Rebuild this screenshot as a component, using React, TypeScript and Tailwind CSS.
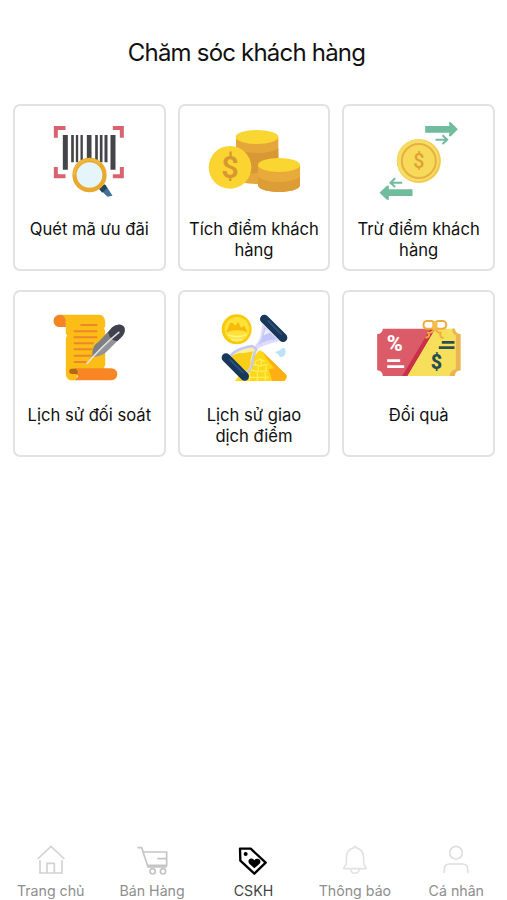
import { ReactNode, useState } from 'react'

const ICON = 'block w-[100px] h-[90px] shrink-0'

function ScanIcon() {
  return (
    <svg className={ICON} viewBox="-2.5 0 300 270" fill="none">
      <g stroke="#d9626f" strokeWidth="12">
        <path d="M48 68V39H77M219 39H246V68M48 156V184H77M219 184H246V156"/>
      </g>
      <g fill="#454549">
        <path d="M69 60h15v104H69zM94 60h8v82h-8zM108 60h7v82h-7zM122 60h7v76h-7zM141 60h14v75h-14zM166 60h8v78h-8zM180 60h8v82h-8zM194 60h9v82h-9zM212 60h15v104h-15z"/>
      </g>
      <path d="M177 220L197 209L218 242L203 245Z" fill="#3f719b"/>
      <path d="M176 220L195 208L202 220L187 233Z" fill="#294456"/>
      <circle cx="149" cy="180" r="45" fill="#e4f5fc" stroke="#eaa92e" strokeWidth="13"/>
      <path d="M103 180a46 46 0 0 1 78-33" stroke="#f1b642" strokeWidth="7"/>
    </svg>
  )
}

function CoinsIcon() {
  return (
    <svg className={ICON} viewBox="12 0 300 270">
      <path d="M108 66V190C108 200 138 207 170 207C205 207 235 200 235 190V66Z" fill="#e5a73a"/>
      <path d="M108 99C130 119 212 119 235 99V133C200 133 177 140 174 157V174C150 178 125 174 108 166Z" fill="#d89835"/>
      <ellipse cx="171" cy="66" rx="64" ry="21" fill="#fad632"/>
      <path d="M174 150V212C184 237 290 237 300 212V150Z" fill="#e7aa3b"/>
      <path d="M174 184C192 207 282 207 300 184V212C290 237 184 237 174 212Z" fill="#dc9d36"/>
      <ellipse cx="237" cy="150" rx="63" ry="21" fill="#fad632"/>
      <circle cx="90" cy="157" r="64" fill="#fbd432"/>
      <path d="M52 105A64 64 0 0 0 130 207A64 64 0 0 1 52 105Z" fill="#fedc41"/>
      <text x="90" y="189" textAnchor="middle" fontFamily="Roboto, sans-serif" fontSize="92" fontWeight="600" fill="#d9982f">$</text>
    </svg>
  )
}

function TransferIcon() {
  return (
    <svg className={ICON} viewBox="-4.5 0 300 270">
      <g fill="#70bc9d">
        <path d="M164 33H237L235 22H241L262 43L241 64H235L237 53H164Z"/>
        <path d="M126 223H55V212H49L27 233L49 254H55V243H126Z"/>
      </g>
      <g fill="none" stroke="#70bc9d" strokeWidth="6">
        <path d="M195 74H229M216 61L230 74L216 87M95 203H61M74 190L60 203L74 216"/>
      </g>
      <circle cx="145" cy="138" r="66" fill="#f0c94e"/>
      <circle cx="142" cy="136" r="63" fill="#f5dc62"/>
      <circle cx="145" cy="138" r="51" fill="#f7da59" stroke="#e8b043" strokeWidth="6"/>
      <text x="145" y="159" textAnchor="middle" fontFamily="Roboto, sans-serif" fontSize="59" fontWeight="500" fill="#dfa136">$</text>
    </svg>
  )
}

function ScrollIcon() {
  return (
    <svg className={ICON} viewBox="-1.5 0 300 270">
      <path d="M61 41H176C190 41 197 49 197 63V76L193 82L197 90V193L193 200L197 207V222H98C86 222 79 214 79 204V111L83 104L79 98V63Z" fill="#fbbd16"/>
      <path d="M61 41C36 41 36 78 61 78H79V63C79 52 73 41 61 41Z" fill="#f58426"/>
      <path d="M79 202H112V238H98C86 238 79 230 79 218Z" fill="#fbbd16"/>
      <path d="M103 202H214C240 202 240 238 214 238H107L116 225L109 220L118 211Z" fill="#f98625"/>
      <path d="M97 203C86 203 87 219 97 219H113L116 211L109 203Z" fill="#b76518"/>
      <g stroke="#ed872d" strokeWidth="6" strokeLinecap="round">
        <path d="M125 72H171M105 91H171M105 109H171M105 127H160M105 145H156M105 164H155M105 183H139"/>
      </g>
      <path d="M160 167C156 146 163 132 178 122L217 80C229 70 246 67 254 78C260 92 252 104 240 113L206 148C195 160 181 168 160 167Z" fill="#939497"/>
      <path d="M160 167C156 146 163 132 178 122L217 80C229 70 246 67 248 75Z" fill="#7d7f83"/>
      <path d="M207 94L217 80C229 70 246 67 254 78C260 92 252 104 234 120C220 121 208 111 207 94Z" fill="#40414f"/>
      <path d="M143 187C170 156 198 126 238 94" fill="none" stroke="#dfdfdc" strokeWidth="5" strokeLinecap="round"/>
    </svg>
  )
}

function HourglassIcon() {
  return (
    <svg className={ICON} viewBox="-3 0 300 270">
      <circle cx="95" cy="85" r="45" fill="#f9c90b"/>
      <circle cx="96" cy="85" r="37" fill="#ffe137"/>
      <path d="M64 94L75 67C81 62 87 67 90 75L100 62L108 80L118 74L128 95C113 85 79 86 64 94Z" fill="#f6bb08"/>
      <path d="M69 102Q96 112 123 102M79 115Q95 121 111 115" fill="none" stroke="#fbf48d" strokeWidth="5"/>
      <path d="M90 240L159 151Q165 146 171 151L242 220Q250 231 237 240Z" fill="#ffd719"/>
      <path d="M171 151L242 220Q250 231 237 240H202L191 205L209 202L190 180Z" fill="#ffae13"/>
      <path d="M151 181L165 175L179 181M136 195L151 190L165 195L188 190M120 211L139 207L158 212L188 209M113 229H192M151 181V195M169 178V192M138 196V211M160 196V211M183 194V210M134 213V239M157 213V239M181 213V239" fill="none" stroke="#ffec58" strokeWidth="4"/>
      <path d="M171 68Q170 116 151 132Q146 139 152 146Q174 132 224 120Z" fill="#dddcff"/>
      <path d="M177 77Q175 115 157 132Q187 116 216 115Z" fill="#c2c5fa"/>
      <path d="M181 84L176 103L198 94Z" fill="#ecebff"/>
      <path d="M73 169Q88 144 142 135L153 148Q139 165 140 188Q138 204 126 216Z" fill="#fff0a0"/>
      <path d="M76 171Q88 154 119 156L145 151Q135 170 137 188Q134 204 124 211Z" fill="#f8ce19"/>
      <path d="M73 169Q88 144 142 135L154 145Q143 165 142 187Q139 204 126 215" fill="none" stroke="#c5c7f7" strokeWidth="7"/>
      <g stroke="#18375b" strokeWidth="26" strokeLinecap="round">
        <path d="M178 54L234 110M63 170L119 226"/>
      </g>
      <g stroke="#2c4f76" strokeWidth="6" strokeLinecap="round">
        <path d="M190 60L228 99M76 177L114 215"/>
      </g>
      <path d="M207 153Q224 152 230 142Q242 137 242 153Q240 171 224 167Q220 157 207 153Z" fill="#bce2f9"/>
    </svg>
  )
}

function VoucherIcon() {
  return (
    <svg className={ICON} viewBox="-3.5 -15 300 270">
      <path d="M38 68H196L112 210H38Q37 194 21 193V84Q37 83 38 68Z" fill="#dc5b68"/>
      <path d="M181 68H196L112 210H96Z" fill="#ca3048"/>
      <path d="M196 68H254Q255 83 271 84V193Q255 194 254 210H112Z" fill="#f8df5b"/>
      <path d="M246 68H254Q255 83 271 84V193Q255 194 254 210H238Q240 194 257 189V88Q246 83 246 68Z" fill="#eab454"/>
      <g fill="none" stroke="#efad3e" strokeWidth="6">
        <rect x="160" y="45" width="33" height="23" rx="10"/>
        <rect x="195" y="45" width="33" height="23" rx="10"/>
        <path d="M192 65Q190 81 175 81Q181 94 166 95M196 65Q198 81 211 80Q207 96 221 95"/>
      </g>
      <rect x="186" y="46" width="16" height="25" rx="5" fill="#f7bd48"/>
      <text x="74" y="135" textAnchor="middle" fontFamily="Roboto, sans-serif" fontSize="65" fontWeight="800" fill="#fff">%</text>
      <g stroke="#fff" strokeWidth="8"><path d="M51 164H90M51 182H102"/></g>
      <g stroke="#284e52" strokeWidth="8"><path d="M215 109H253M206 125H253"/></g>
      <text x="199" y="188" textAnchor="middle" fontFamily="Roboto, sans-serif" fontSize="59" fontWeight="800" fill="#244e53">$</text>
    </svg>
  )
}

function NavSvg({ children }: { children: ReactNode }) {
  return (
    <svg className="block w-9 h-[30px]" viewBox="0 0 108 90" fill="none" stroke="currentColor" strokeWidth="5">
      {children}
    </svg>
  )
}

const FEATURES = [
  { label: 'Quét mã ưu đãi',       icon: ScanIcon },
  { label: 'Tích điểm khách hàng', icon: CoinsIcon },
  { label: 'Trừ điểm khách hàng',  icon: TransferIcon },
  { label: 'Lịch sử đối soát',     icon: ScrollIcon },
  { label: 'Lịch sử giao dịch điểm', icon: HourglassIcon },
  { label: 'Đổi quà',              icon: VoucherIcon },
]

const TABS = [
  {
    label: 'Trang chủ',
    cor: 'text-[#d2d2d2]',
    icon: <path strokeWidth="5" d="M14 42L54 4L94 42M21 46V84H87V46M42 84V55H64V84"/>,
  },
  {
    label: 'Bán Hàng',
    cor: 'text-[#c5c5c5]',
    icon: (
      <g strokeWidth="5">
        <path d="M10 8H23L42 66H98M29 21H98V61H41M70 41H96"/>
        <circle cx="56" cy="79" r="8"/>
        <circle cx="87" cy="79" r="8"/>
      </g>
    ),
  },
  {
    label: 'CSKH',
    cor: 'text-black',
    icon: (
      <>
        <path strokeWidth="7" strokeLinejoin="round" d="M15 11H47L92 53L58 86L16 47Z"/>
        <circle cx="32" cy="27" r="6" fill="currentColor" stroke="none"/>
        <path stroke="none" fill="currentColor" d="M58 70L43 56C34 44 50 34 58 46C66 35 84 45 73 57Z"/>
      </>
    ),
  },
  {
    label: 'Thông báo',
    cor: 'text-[#e2e2e2]',
    icon: <path strokeLinejoin="round" d="M51 8Q54 0 57 8C72 12 80 24 80 40V56L88 71H20L28 56V40C28 24 36 12 51 8ZM41 72C43 89 65 89 67 72"/>,
  },
  {
    label: 'Cá nhân',
    cor: 'text-[#dedede]',
    icon: (
      <>
        <circle cx="54" cy="23" r="19"/>
        <path strokeLinecap="round" d="M19 82V73Q19 57 35 57H73Q89 57 89 73V82"/>
      </>
    ),
  },
]

export default function App() {
  const [active, setActive] = useState('CSKH')

  return (
    <div className="h-screen flex flex-col bg-white text-[#111] font-['Inter',sans-serif]">
      <header className="h-[104px] shrink-0 pt-9 pr-[14px] text-center">
        <h1 className="text-[24px] leading-[34px] tracking-[-0.8px]">Chăm sóc khách hàng</h1>
      </header>

      <main className="flex-1 pl-[13px] pr-3">
        <div className="grid grid-cols-3 gap-x-3 gap-y-[19px]">
          {FEATURES.map(f => (
            <button key={f.label} className="h-[167px] flex flex-col items-center rounded-[7px] border-2 border-[#e2e2e2] pt-[9px]">
              <f.icon/>
              <span className="mt-[14px] max-w-[131px] text-[16.6px] leading-[21px]">{f.label}</span>
            </button>
          ))}
        </div>
      </main>

      {/* Bottom tabs */}
      <nav className="h-[55px] shrink-0 grid grid-cols-5">
        {TABS.map(t => (
          <button key={t.label} onClick={() => setActive(t.label)} className="flex flex-col items-center">
            <span className={t.cor}><NavSvg>{t.icon}</NavSvg></span>
            <span className={`mt-[6px] text-[14.2px] leading-5 whitespace-nowrap ${t.label === active ? 'text-[#444]' : 'text-[#8e8e8e]'}`}>
              {t.label}
            </span>
          </button>
        ))}
      </nav>
    </div>
  )
}
